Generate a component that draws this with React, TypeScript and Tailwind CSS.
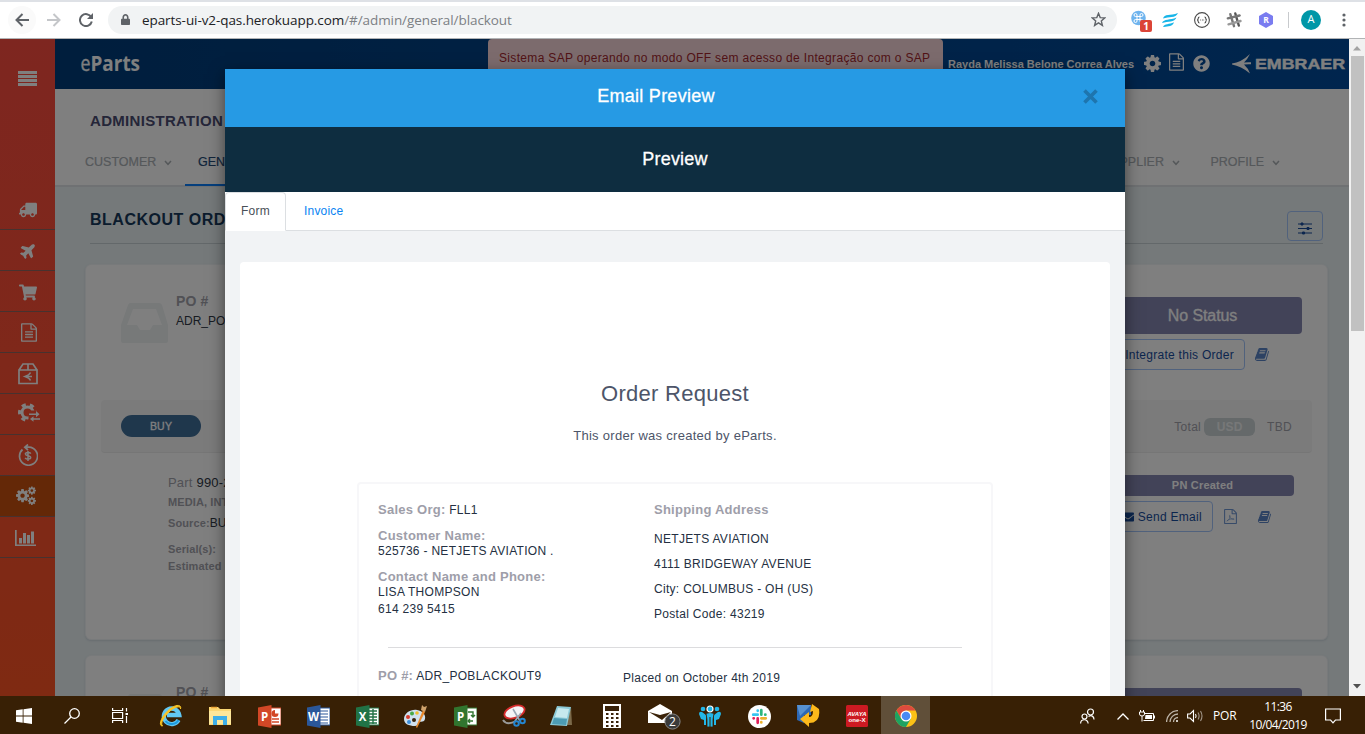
import React from "react";
import { FaTruck, FaPlane, FaShoppingCart, FaQuestionCircle, FaEnvelope, FaLock } from "react-icons/fa";

const COG =
  "M1024 896q0-106-75-181t-181-75-181 75-75 181 75 181 181 75 181-75 75-181zm512-109v222q0 12-8 23t-20 13l-185 28q-19 54-39 91 35 50 107 138 10 12 10 25t-9 23q-27 37-99 108t-94 71q-12 0-26-9l-138-108q-44 23-91 38-16 136-29 186-7 28-36 28h-222q-14 0-24.500-8.500t-11.500-21.500l-28-184q-49-16-90-37l-141 107q-10 9-25 9-14 0-25-11-126-114-165-168-7-10-7-23 0-12 8-23 15-21 51-66.500t54-70.500q-27-50-41-99l-183-27q-13-2-21-12.500t-8-23.500v-222q0-12 8-23t19-13l186-28q14-46 39-92-40-57-107-138-10-12-10-24 0-10 9-23 26-36 98.500-107.500t94.500-71.500q13 0 26 10l138 107q44-23 91-38 16-136 29-186 7-28 36-28h222q14 0 24.500 8.500t11.500 21.500l28 184q49 16 90 37l142-107q9-9 24-9 13 0 25 10 129 119 165 170 7 8 7 22 0 12-8 23-15 21-51 66.500t-54 70.500q26 50 41 98l183 28q13 2 21 12.500t8 23.500z";
const FILE_FRAME =
  "M1596 380q28 28 48 76t20 88v1152q0 40-28 68t-68 28h-1344q-40 0-68-28t-28-68v-1600q0-40 28-68t68-28h896q40 0 88 20t76 48zm-444-244v376h376q-10-29-22-41l-313-313q-12-12-41-22zm384 1528v-1024h-416q-40 0-68-28t-28-68v-416h-768v1536h1280z";
const FILE_LINES =
  "M512 800q0-14 9-23t23-9h704q14 0 23 9t9 23v64q0 14-9 23t-23 9h-704q-14 0-23-9t-9-23v-64zm736 224q14 0 23 9t9 23v64q0 14-9 23t-23 9h-704q-14 0-23-9t-9-23v-64q0-14 9-23t23-9h704zm0 256q14 0 23 9t9 23v64q0 14-9 23t-23 9h-704q-14 0-23-9t-9-23v-64q0-14 9-23t23-9h704z";
const BOOK =
  "M1639 478q40 57 18 129l-275 906q-19 64-76.500 107.500t-122.500 43.500h-923q-77 0-148.500-53.500t-99.500-131.500q-24-67-2-127 0-4 3-27t4-37q1-8-3-21.500t-3-19.500q2-11 8-21t16.500-23.500 16.500-23.500q23-38 45-91.500t30-91.500q3-10 .5-30t-.5-28q3-11 17-28t17-23q21-36 42-92t25-90q1-9-2.500-32t.5-28q4-13 22-30.500t22-22.500q19-26 42.500-84.500t27.500-96.500q1-8-3-25.500t-2-26.500q2-8 9-18t18-23 17-21q8-12 16.500-30.500t15-35 16-36 19.500-32 26.500-23.500 36-11.500 47.500 5.500l-1 3q38-9 51-9h761q74 0 114 56t18 130l-274 906q-36 119-71.500 153.500t-128.500 34.500h-869q-27 0-38 15-11 16-1 43 24 70 144 70h923q29 0 56-15.500t35-41.500l300-987q7-22 5-57 38 15 59 43zm-1064 2q-4 13 2 22.500t20 9.500h608q13 0 25.500-9.500t16.500-22.500l21-64q4-13-2-22.500t-20-9.500h-608q-13 0-25.500 9.500t-16.500 22.500zm-83 256q-4 13 2 22.500t20 9.500h608q13 0 25.500-9.500t16.500-22.500l21-64q4-13-2-22.500t-20-9.500h-608q-13 0-25.500 9.500t-16.500 22.500z";

type IconProps = { className?: string };

const Cog = ({ className = "" }: IconProps) => (
  <svg viewBox="0 128 1536 1536" fill="currentColor" className={className}><path d={COG} /></svg>
);
const FileText = ({ className = "" }: IconProps) => (
  <svg viewBox="128 0 1536 1792" fill="currentColor" className={className}><path d={FILE_FRAME} /><path d={FILE_LINES} /></svg>
);
const Book = ({ className = "" }: IconProps) => (
  <svg viewBox="0 0 1792 1792" fill="currentColor" className={className}><path d={BOOK} /></svg>
);
const FilePdf = ({ className = "" }: IconProps) => (
  <svg viewBox="128 0 1536 1792" fill="currentColor" className={className}>
    <path d={FILE_FRAME} />
    <path d="M460 1440C700 1320 860 1050 850 820c-5-90-80-90-80 0 10 240 240 440 500 430 90-5 90-80 0-90C1000 1130 640 1260 460 1440z" fill="none" stroke="currentColor" strokeWidth="75" />
  </svg>
);

function Hamburger() {
  return <svg className="h-[15px] w-[19px]" viewBox="0 0 19 15" fill="currentColor"><rect width="19" height="3" /><rect y="4" width="19" height="3" /><rect y="8" width="19" height="3" /><rect y="12" width="19" height="3" /></svg>;
}
function BoxIcon() {
  return (
    <svg className="h-[22px] w-5" viewBox="0 0 20 22" fill="none" stroke="currentColor" strokeWidth="1.700">
      <path d="M1 7v13.500h18V7zM1 7l4-6h10l4 6M10 1v6" />
      <path d="M12.500 9.500Q11.500 12 7 13.500q4.500 1.500 5.500 4M7 13.500h7" strokeWidth="1.500" />
    </svg>
  );
}
function CogSwap() {
  return (
    <svg className="h-[19px] w-[22px]" viewBox="0 0 22 19">
      <defs><mask id="swapMask"><rect width="22" height="19" fill="#fff" /><rect x="10.500" y="7.500" width="12" height="12" fill="#000" /></mask></defs>
      <g mask="url(#swapMask)"><circle cx="9.500" cy="9.500" r="5.500" fill="none" stroke="currentColor" strokeWidth="3" /><circle cx="9.500" cy="9.500" r="8" fill="none" stroke="currentColor" strokeWidth="3" strokeDasharray="4.200 4.180" strokeDashoffset="2" /></g>
      <path d="M11 10.500h7v-2.500l3.500 3.300-3.500 3v-2.300h-7zM22 15.200h-6.500v-2l-3.500 2.800 3.500 2.800v-2H22z" fill="currentColor" />
    </svg>
  );
}
function MoneyBack() {
  return (
    <svg className="h-[22px] w-5" viewBox="0 0 20 22" fill="none" stroke="currentColor" strokeWidth="1.700">
      <path d="M4.500 5.500A9 9 0 1 0 11 3.200H7M10 .5L6.800 3.200 10 6" />
      <path d="M12.800 9.600c-1-1.500-5.400-1.500-5.400.5 0 2.300 5.300 1 5.300 3.500 0 2-4.600 2-5.500.2M10 7v10" strokeWidth="1.500" />
    </svg>
  );
}
function Cogs() {
  return (
    <svg className="h-5 w-5" viewBox="0 0 20 20" fill="currentColor">
      <g transform="translate(0 3.100) scale(.0085) translate(0 -128)"><path d={COG} /></g>
      <g transform="translate(11.800 .5) scale(.0053) translate(0 -128)"><path d={COG} /></g>
      <g transform="translate(11.800 10.800) scale(.0053) translate(0 -128)"><path d={COG} /></g>
    </svg>
  );
}
function Bars() {
  return <svg className="h-4 w-[21px]" viewBox="0 0 21 16" fill="currentColor"><path d="M0 0h1.700v14.500H21V16H0zM4 8h3v5.500H4zM8 3h3v10.500H8zM12 5h3v8.500h-3zM16 1.500h3v12h-3z" /></svg>;
}
function Inbox() {
  return <svg className="h-10 w-[47px]" viewBox="0 0 47 40"><path fillRule="evenodd" d="M9 0h29q2 0 3 2l6 20v16q0 2-2 2H2q-2 0-2-2V22L7 2q1-2 2-2zM12 6L6 22h10l3 5h10l3-5h9L35 6z" fill="#eef2f3" /></svg>;
}
function Chevron() {
  return <svg className="ml-[8px] h-[6px] w-2" viewBox="0 0 8 6" fill="none" stroke="currentColor" strokeWidth="1.500"><path d="M1 1l3 3.300L7 1" /></svg>;
}

const menu: { icon: React.ReactNode; cls: string; active?: boolean }[] = [
  { icon: <FaTruck className="size-[18px] -scale-x-100" />, cls: "pt-0.5" },
  { icon: <FaPlane className="size-[17px] -rotate-45" />, cls: "pl-0.5" },
  { icon: <FaShoppingCart className="size-[18px] pt-px" />, cls: "pt-0.5" },
  { icon: <FileText className="h-[19px] w-4" />, cls: "pl-0.5" },
  { icon: <BoxIcon />, cls: "pt-0.5" },
  { icon: <CogSwap />, cls: "pl-[3px] pb-1" },
  { icon: <MoneyBack />, cls: "" },
  { icon: <Cogs />, cls: "pr-1", active: true },
  { icon: <Bars />, cls: "pr-[5px] pt-px" },
];

function BrowserBar() {
  return (
    <div className="flex h-[39px] items-center border-b border-[#b1b3b5] bg-white pt-px shadow-[inset_0_2px_0_#dee1e6]">
      <div className="ml-2 flex size-7 items-center justify-center rounded-full bg-[#fafafa]">
        <svg className="size-[14px]" viewBox="0 0 14 14" fill="none" stroke="#5f6368" strokeWidth="2"><path d="M14 7H1.500M7.500 1L1.500 7l6 6" /></svg>
      </div>
      <svg className="ml-[11px] size-[14px]" viewBox="0 0 14 14" fill="none" stroke="#c4c6c9" strokeWidth="2"><path d="M0 7h12.500M6.500 1l6 6-6 6" /></svg>
      <svg className="ml-[18px] size-[14px]" viewBox="0 0 14 14" fill="none" stroke="#5f6368" strokeWidth="2"><path d="M12.300 4.300A6 6 0 1 0 12.800 8.500" /><path d="M14 0v6H8z" fill="#5f6368" stroke="none" /></svg>
      <div className="ml-[15px] flex h-7 w-[1009px] items-center rounded-full bg-[#f1f3f4] pl-[13px]">
        <FaLock className="h-[11px] w-[9px] text-[#5f6368]" preserveAspectRatio="none" />
        <span className="ml-3 font-['Open_Sans',sans-serif] text-[13.500px] leading-7 tracking-[-0.080px] text-[#202124]">eparts-ui-v2-qas.herokuapp.com<span className="text-[#7c8084]">/#/admin/general/blackout</span></span>
        <svg className="mr-[11px] ml-auto size-[15px]" viewBox="0 0 15 15" fill="none" stroke="#5f6368" strokeWidth="1.400"><path d="M7.500 1.300l1.700 4.300 4.600.3-3.500 3 1.100 4.500-3.900-2.500-3.900 2.500 1.100-4.500-3.500-3 4.600-.3z" /></svg>
      </div>
      <svg className="mt-[3px] ml-[14px] h-[22px] w-[21px]" viewBox="0 0 21 22">
        <circle cx="7.500" cy="8" r="7.300" fill="#6fb4ee" />
        <path d="M6 6.500H9V9.500H6zM6 6.500H4.500A1.500 1.500 0 1 1 6 5zM9 6.500V5a1.500 1.500 0 1 1 1.500 1.500zM9 9.500h1.500A1.500 1.500 0 1 1 9 11zM6 9.500V11a1.500 1.500 0 1 1-1.500-1.500z" fill="none" stroke="#fff" />
        <rect x="9" y="10" width="12" height="12" rx="2" fill="#db4437" />
        <text x="15" y="20" textAnchor="middle" fill="#fff" fontSize="10" fontWeight="700" fontFamily="Open Sans">1</text>
      </svg>
      <svg className="ml-[10px] h-[14px] w-4" viewBox="0 0 16 14" fill="#18b5e8"><path d="M1 5.500C2.500 .5 8 3 16 0c-2.500 5.500-9 3.500-15 5.500zM0 10C2 5.500 8 7.500 14.500 4.500 12.500 9.500 6 8 0 10zM1 14.200c1.500-4 6-2.500 11-5-1.500 4.800-6 3.500-11 5z" /></svg>
      <svg className="ml-4 size-4" viewBox="0 0 16 16" fill="none" stroke="#4a4a4a" strokeWidth="1.100"><circle cx="8" cy="8" r="7.400" /><path d="M5.500 5q-1.300 0-1.300 1.500T3 8q1.200 0 1.200 1.500T5.500 11M10.500 5q1.300 0 1.300 1.500T13 8q-1.200 0-1.200 1.500T10.500 11M6.300 8h.8M8 8h.8M9.500 8h.6" /></svg>
      <svg className="ml-4 size-4" viewBox="0 0 16 16" fill="none" stroke="#777" strokeWidth="2.400" strokeLinecap="round"><path d="M4.300 2.200l3.700 12" /><path d="M9.300 1.500l3.500 12" stroke="#555" /><path d="M1.800 6.300L13.500 3.500" /><path d="M2.500 12.300L14.500 9" stroke="#999" /></svg>
      <svg className="ml-4 size-4" viewBox="0 0 16 16"><path d="M8 0l7 4v8l-7 4-7-4V4z" fill="#7a7cf0" /><text x="8" y="11" textAnchor="middle" fontSize="8.500" fontWeight="700" fill="#fff" fontFamily="Open Sans">R</text></svg>
      <div className="ml-[14px] h-4 w-px bg-[#c8cacd]" />
      <div className="ml-3 flex size-5 items-center justify-center rounded-full bg-[#0097a7] font-['Open_Sans',sans-serif] text-[11px] text-white">A</div>
      <svg className="ml-[21px] h-[14px] w-1" viewBox="0 0 4 14" fill="#5f6368"><circle cx="2" cy="2" r="1.600" /><circle cx="2" cy="7" r="1.600" /><circle cx="2" cy="12" r="1.600" /></svg>
    </div>
  );
}

function Sidebar() {
  return (
    <aside className="flex w-[55px] flex-col bg-linear-to-b from-[#fd4c40] to-[#ff5424] text-white">
      <div className="flex h-[150px] justify-center pt-8"><Hamburger /></div>
      {menu.map((m, i) => (
        <div key={i} className={`flex h-[41px] items-center justify-center border-b border-[#8f655f] ${m.active ? "bg-[#c8500f]" : ""} ${m.cls}`}>{m.icon}</div>
      ))}
    </aside>
  );
}

function Header() {
  return (
    <header className="flex h-[50px] bg-linear-to-r from-[#003c7a] to-[#004b9c] text-white">
      <svg className="mt-[14px] ml-[25px] h-6 w-[61px] flex-none" viewBox="0 0 61 24" fill="#fff" fontFamily="Open Sans" fontSize="21">
        <text x=".5" y="18" textLength="10" lengthAdjust="spacingAndGlyphs" stroke="#fff" strokeWidth=".3">e</text>
        <text x="10.500" y="18" fontWeight="700" textLength="49.500" lengthAdjust="spacingAndGlyphs">Parts</text>
      </svg>
      <div className="ml-[347px] h-[50px] w-[455px] flex-none rounded-t bg-[#f8d7da] pl-[11px] text-[12px] leading-[38px] tracking-[0.330px] whitespace-nowrap text-[#a5282f]">Sistema SAP operando no modo OFF sem acesso de Integração com o SAP</div>
      <div className="ml-[5px] w-[186px] flex-none pt-[17px] text-[11px] leading-4 font-bold whitespace-nowrap">Rayda Melissa Belone Correa Alves</div>
      <Cog className="mt-4 ml-[10px] size-[17px] flex-none" />
      <FileText className="mt-[14px] ml-[8px] h-[18px] w-[15px] flex-none" />
      <FaQuestionCircle className="mt-4 ml-[9px] size-[17px] flex-none" />
      <svg className="mt-[14px] ml-[22px] h-[22px] w-[115px] flex-none" viewBox="0 0 115 22" fill="#fff">
        <path d="M0 10.500Q9 9.500 18 1q-3 6-6 8.500 3-.5 7-.3v2q-4-.2-7 .3 4 3.500 6 9Q9 13 0 11.500z" />
        <text x="23" y="16" fontFamily="Liberation Sans" fontWeight="700" fontSize="14" stroke="#fff" strokeWidth=".4" textLength="90" lengthAdjust="spacingAndGlyphs">EMBRAER</text>
      </svg>
    </header>
  );
}

function Nav() {
  return (
    <nav className="h-[98px] border-b-2 border-[#dfe3e6] bg-white">
      <h1 className="pt-[22px] pl-[35px] text-[15px] leading-5 font-bold tracking-[0.300px] text-[#4a4d72]">ADMINISTRATION</h1>
      <div className="mt-[12px] flex h-[43px] pl-[30px] text-[12.500px] text-[#aab0b5] [-webkit-text-stroke:0.2px]">
        <div className="flex w-[100px] items-center pb-1">CUSTOMER<Chevron /></div>
        <div className="flex w-[110px] items-center border-b-2 border-[#0a7ffb] pb-0.5 pl-[13px] text-[#234a77]">GENERAL<Chevron /></div>
        <div className="ml-auto flex w-[121px] items-center justify-end pr-[6px] pb-1">SUPPLIER<Chevron /></div>
        <div className="mr-[69px] flex w-[94px] items-center justify-end pb-1">PROFILE<Chevron /></div>
      </div>
    </nav>
  );
}

function OrderCard() {
  return (
    <section className="mx-[30px] mr-[21px] h-[376px] rounded-md border border-[#f0f4f6] bg-white shadow-[0_1px_2px_#ced9e0] text-[#a2a2ab]">
      <div className="flex h-[135px] justify-between">
        <div className="flex pl-[35px]">
          <div className="pt-[38px]"><Inbox /></div>
          <div className="pt-[27px] pl-2">
            <div className="text-[14px] leading-[18px] font-bold tracking-[0.100px]">PO #</div>
            <div className="mt-[2px] text-[12px] leading-[18px] text-[#303846]">ADR_POBLACKOUT9</div>
          </div>
        </div>
        <div className="mr-[25px] w-[199px] pt-8">
          <div className="h-[37px] rounded bg-[#8586b1] text-center text-[16px] leading-[38px] tracking-[-0.100px] text-white [-webkit-text-stroke:0.3px]">No Status</div>
          <div className="mt-[5px] flex items-center">
            <div className="h-[31px] w-[142px] rounded border border-[#a3c5fa] pr-[10px] text-right text-[12px] leading-[30px] tracking-[0.270px] whitespace-nowrap text-[#184d9d]">Integrate this Order</div>
            <Book className="ml-[10px] size-[15px] text-[#5b85c6]" />
          </div>
        </div>
      </div>
      <div className="mx-[15px] flex h-[53px] items-center justify-between rounded border-b border-[#ececec] bg-[#f7f7f7]">
        <div className="ml-5 h-[22px] w-20 rounded-full bg-[#3f6e98] text-center text-[10.500px] leading-[22px] tracking-[0.200px] text-white [-webkit-text-stroke:0.3px]">BUY</div>
        <div className="flex items-center pt-0.5 pr-5 text-[12px] tracking-[0.300px]">Total<span className="mr-[12px] ml-[3px] h-[18px] w-[51px] rounded-md bg-[#cbd3d5] text-center text-[12px] leading-[18px] font-bold tracking-[0.200px] text-white/70">USD</span>TBD</div>
      </div>
      <div className="flex justify-between">
        <div className="pt-[21px] pl-[82px] text-[11px] leading-[17px] font-bold tracking-[0.100px]">
          <div className="text-[13px] leading-[18px] font-normal tracking-[0.200px]">Part <span className="text-[#303846]">990-2455-001</span></div>
          <div className="mt-[2px]">MEDIA, INTEGRATED</div>
          <div className="mt-[4px]">Source:<span className="text-[12px] font-normal text-[#303846]">BUY</span></div>
          <div className="mt-[9px]">Serial(s):</div>
          <div>Estimated Date:</div>
        </div>
        <div className="mr-[33px] w-[183px] pt-[22px]">
          <div className="h-[21px] rounded bg-[#8586b1] text-center text-[11px] leading-[21px] font-bold tracking-[0.200px] text-white">PN Created</div>
          <div className="mt-[5px] flex items-center">
            <div className="flex h-[31px] w-[102px] items-center justify-end rounded border border-[#a3c5fa] pr-[10px] text-[12px] tracking-[0.300px] text-[#184d9d]"><FaEnvelope className="mr-[4px] size-[12px]" />Send Email</div>
            <FilePdf className="ml-[11px] h-[15px] w-[13px] text-[#6f96d2]" />
            <Book className="ml-[21px] size-[14px] text-[#5b85c6]" />
          </div>
        </div>
      </div>
    </section>
  );
}

function EmailModal() {
  return (
    <div className="absolute top-[30px] left-[225px] h-[640px] w-[900px] bg-[#f1f3f5] shadow-[0_5px_15px_rgba(0,0,0,.5)]">
      <div className="flex h-[58px] bg-[#269ae4] text-white">
        <div className="flex-1 pl-[16px] text-center text-[18px] leading-[54px] tracking-[0.250px] [-webkit-text-stroke:0.3px]">Email Preview</div>
        <svg className="mt-[20px] mr-[27px] ml-[12px] size-[15px]" viewBox="0 0 15 15" fill="none" stroke="#1e75ae" strokeWidth="3.600"><path d="M1.500 1.500l12 12M13.500 1.500l-12 12" /></svg>
      </div>
      <div className="h-[65px] bg-[#0e2d40] text-center text-[18px] leading-[64px] tracking-[0.200px] text-white [-webkit-text-stroke:0.3px]">Preview</div>
      <div className="flex h-[39px] border-b border-[#dcdfe2] bg-white text-[12px] leading-[37px]">
        <div className="h-[39px] w-[61px] rounded-t border border-[#dcdfe2] border-b-white bg-white text-center tracking-[0.300px] text-[#495057]">Form</div>
        <div className="pl-[18px] leading-[38px] tracking-[0.200px] text-[#0a84f2]">Invoice</div>
      </div>
      <div className="mx-[15px] mt-[31px] h-[450px] rounded bg-white pt-[118px] text-[#243042]">
        <h2 className="text-center text-[22px] leading-[27px] tracking-[0.280px] text-[#4d5569]">Order Request</h2>
        <p className="mt-[20px] text-center text-[13px] leading-[18px] tracking-[0.280px] text-[#4d5569]">This order was created by eParts.</p>
        <div className="mx-[117px] mt-[37px] h-[300px] rounded border-2 border-[#f7f7f9] pt-[17px] pr-[17px] pl-[19px] text-[12px] tracking-[0.300px]">
          <div className="flex h-[146px]">
            <div className="w-[276px]">
              <div className="leading-[18px]"><Label>Sales Org:</Label> FLL1</div>
              <div className="mt-[9px] leading-4"><Label>Customer Name:</Label></div>
              <div className="leading-[15px]">525736 - NETJETS AVIATION .</div>
              <div className="mt-[10px] leading-4"><Label>Contact Name and Phone:</Label></div>
              <div className="leading-[15px]">LISA THOMPSON</div>
              <div className="leading-[18px]">614 239 5415</div>
            </div>
            <div className="leading-[25px]">
              <div className="mb-[8px] leading-[18px]"><Label>Shipping Address</Label></div>
              <div>NETJETS AVIATION</div>
              <div>4111 BRIDGEWAY AVENUE</div>
              <div>City: COLUMBUS - OH (US)</div>
              <div>Postal Code: 43219</div>
            </div>
          </div>
          <hr className="mr-[12px] ml-[10px] border-[#dcdcde]" />
          <div className="flex pt-[19px] leading-[18px]">
            <div className="w-[245px]"><Label>PO #:</Label> ADR_POBLACKOUT9</div>
            <div className="pt-[2px]">Placed on October 4th 2019</div>
          </div>
        </div>
      </div>
    </div>
  );
}

const Label = ({ children }: { children: React.ReactNode }) => (
  <span className="text-[13px] font-bold tracking-[0.250px] text-[#9e9ea9]">{children}</span>
);

function Office({ letter, color, kind }: { letter: string; color: string; kind: string }) {
  return (
    <svg className="size-[23px]" viewBox="0 0 23 23">
      <rect x="11" y="3" width="12" height="17" fill="#fff" stroke={color} />
      {kind === "pie" && <><circle cx="17" cy="8.500" r="3.500" fill={color} /><path d="M17 8.500V4.500h4v4z" fill="#fff" /><path d="M14 14h7M14 17h7" stroke={color} strokeWidth="1.300" /></>}
      {kind === "lines" && <path d="M13 6h8M13 9h8M13 12h8M13 15h8M13 18h8" stroke={color} strokeWidth="1.200" />}
      {kind === "grid" && <path d="M13 6h8M13 9h8M13 12h8M13 15h8M13 18h8M17 4v15" stroke={color} strokeWidth="1.400" />}
      {kind === "flow" && <path d="M14 7h5v5M17 10l2 2 2-2M19 16h-5M16 14l-2 2 2 2" fill="none" stroke={color} strokeWidth="1.400" />}
      <path d="M0 2.500L13.500 0v23L0 20.500z" fill={color} />
      <text x="6.500" y="15.500" fontSize="11.500" fontWeight="700" fontFamily="Open Sans" fill="#fff" textAnchor="middle">{letter}</text>
    </svg>
  );
}

const petals = [0, 90, 180, 270];
const slack = ["#36c5f0", "#2eb67d", "#ecb22e", "#e01e5a"];

const apps: React.ReactNode[] = [
  <svg className="mr-0.5 size-6" viewBox="0 0 24 24"><path d="M19.500 16a7.800 7.800 0 1 1 .8-5H8" fill="none" stroke="#62c8f4" strokeWidth="4.300" /><path d="M19.500 16a7.800 7.800 0 0 1-13 1" fill="none" stroke="#1c9be0" strokeWidth="2" /><path d="M3.500 22C-1 22 2 13 9 6.500S23 0 21.500 5C22 1 15 3 10 8S1 19 3.500 22z" fill="#f9c425" stroke="#f9c425" /></svg>,
  <svg className="mr-0.5 size-[22px]" viewBox="0 0 22 22"><path d="M0 2h9l2 2h11v16H0z" fill="#fbd775" /><path d="M0 6h22v13H0z" fill="#fde69a" /><path d="M2 2.500h6" stroke="#f0a93a" strokeWidth="1.500" /><path d="M4 20v-9h14v9h-4v-5H8v5z" fill="#3daee9" /></svg>,
  <Office letter="P" color="#d24726" kind="pie" />,
  <Office letter="W" color="#2b579a" kind="lines" />,
  <Office letter="X" color="#217346" kind="grid" />,
  <svg className="mr-1 size-6" viewBox="0 0 24 24"><path d="M1 15C1 9 8 5 14 6s9 5 8 9-4 2-6 3 0 4-4 4C6 22 1 20 1 15z" fill="#cfe0ee" /><circle cx="5" cy="13" r="2" fill="#d93a2b" /><circle cx="9" cy="9.500" r="2" fill="#47a847" /><circle cx="14" cy="9" r="1.800" fill="#f2bd2c" /><circle cx="6" cy="18" r="2" fill="#3b8edb" /><circle cx="11" cy="16" r="2" fill="#38220a" /><path d="M20 6l-7 17 1 1 8-16z" fill="#e9892d" /><path d="M18 6l1-5 2 2 3-1-2 6z" fill="#cfa26c" /></svg>,
  <Office letter="P" color="#31752f" kind="flow" />,
  <svg className="size-6" viewBox="0 0 24 24" fill="none"><path d="M1 16q4 6 13 1" stroke="#999" strokeWidth="2" /><ellipse cx="12.500" cy="8" rx="10.500" ry="5.800" transform="rotate(-20 12.500 8)" fill="#f4f4f6" stroke="#d52b2b" strokeWidth="1.800" /><path d="M11 5l7 12M19 9l-6 8" stroke="#9aa8b5" strokeWidth="1.600" /><circle cx="14.500" cy="19.500" r="2.300" stroke="#2486d1" strokeWidth="2" /><circle cx="20.500" cy="17" r="2.300" stroke="#2486d1" strokeWidth="2" /></svg>,
  <svg className="mr-1 size-6" viewBox="0 0 24 24"><path d="M22 3l1 18H17z" fill="#7c6a4a" /><path d="M8 2l14 1-4 19-17-1z" fill="#8bc9d6" /><path d="M9 4l11 1-2 9-12-1z" fill="#c6e9ee" /><path d="M5 14l13 1-1 6-14-1z" fill="#4d9cb4" /></svg>,
  <svg className="h-6 w-[18px]" viewBox="0 0 18 24"><path d="M0 0h18v24H0z" fill="#fff" /><path d="M2 2h14v5H2z" fill="#3a2209" /><path d="M3 10h3M8 10h3M13 10h3M3 14h3M8 14h3M13 14h3M3 18h3M8 18h3M13 18h3M3 22h3M8 22h3M13 22h3" stroke="#3a2209" strokeWidth="2" strokeDasharray="2.500 2.500" /></svg>,
  <svg className="ml-1.5 h-[26px] w-8 overflow-visible" viewBox="0 0 32 26"><path d="M0 8L12 1l12 7v12H0z" fill="#fff" /><path d="M1 9l13 8 9-8-11 3z" fill="#3a2209" /><circle cx="24.500" cy="18.500" r="7.600" fill="#3b3b3b" stroke="#888" /><text x="24.500" y="22.800" fontSize="12" fill="#fff" fontFamily="Open Sans" textAnchor="middle">2</text></svg>,
  <svg className="size-[22px]" viewBox="0 0 22 22" fill="#23b7e8"><circle cx="4" cy="4" r="2.300" /><circle cx="18" cy="4" r="2.300" /><path d="M0 9q0-3 3-2l4 3v10H5v-5l-3-1zM22 9q0-3-3-2l-4 3v10h2v-5l3-1z" /><path d="M7 8.500q4-2 8 0l-1 6v7.500H8v-7.500z" stroke="#382005" strokeWidth=".8" /><circle cx="11" cy="4" r="3" stroke="#fff" strokeWidth="1.200" /><path d="M11 12v10" stroke="#382005" /></svg>,
  <svg className="size-[23px]" viewBox="0 0 23 23"><circle cx="11.500" cy="11.500" r="11.500" fill="#fff" />{petals.map((a, i) => <path key={a} transform={`rotate(${a} 11.500 11.500)`} d="M5.200 9.700h4.500M9.700 5.600v.2" fill="none" stroke={slack[i]} strokeWidth="2.700" strokeLinecap="round" />)}</svg>,
  <svg className="size-6" viewBox="0 0 24 24"><path d="M1 1h14v10H8v8L1 16z" fill="#2d68b5" /><path d="M1 1h14L4 12z" fill="#6aa3dc" opacity=".7" /><path d="M16 0l7 5q2 14-10 14v4l-9-8 9-7v5q4 0 4-6l-3 1z" fill="#fdb91b" /></svg>,
  <svg className="size-[22px]" viewBox="0 0 22 22"><rect width="22" height="22" rx="1.500" fill="#cc1a22" /><text x="1.500" y="10.500" fontSize="6" fontWeight="700" fontStyle="italic" fontFamily="Liberation Sans" fill="#fff" textLength="19" lengthAdjust="spacingAndGlyphs">AVAYA</text><text x="2.500" y="16.500" fontSize="5" fontWeight="700" fontFamily="Liberation Sans" fill="#fff" textLength="17" lengthAdjust="spacingAndGlyphs">one-X</text></svg>,
  <svg className="size-[22px]" viewBox="0 0 22 22"><circle cx="11" cy="11" r="11" fill="#fbc116" /><path d="M1.470 5.500A11 11 0 0 1 20.530 5.500H11L6.240 13.750z" fill="#dd4b3e" /><path d="M1.470 5.500A11 11 0 0 0 11 22l4.760-8.250H6.240z" fill="#1da362" /><circle cx="11" cy="11" r="5.500" fill="#fff" /><circle cx="11" cy="11" r="4.300" fill="#4a8af4" /></svg>,
];

function Taskbar() {
  return (
    <footer className="flex h-[38px] items-stretch bg-[#382005] font-['Open_Sans',sans-serif] text-white">
      <div className="flex w-12 items-center justify-center pt-0.5"><svg className="size-4" viewBox="0 0 16 16" fill="#fff"><path d="M0 2.300L6.700 1.300V7.600H0zM7.500 1.200L16 0v7.600H7.500zM0 8.400h6.700v6.300L0 13.700zM7.500 8.400H16V16l-8.500-1.200z" /></svg></div>
      <div className="flex w-12 items-center justify-center pt-0.5"><svg className="size-4" viewBox="0 0 16 16" fill="none" stroke="#fff" strokeWidth="1.300"><circle cx="10.500" cy="5.500" r="4.800" /><path d="M7 9L.5 15.500" /></svg></div>
      <div className="flex w-[51.500px] items-center pl-4"><svg className="h-[15px] w-4" viewBox="0 0 16 15" fill="none" stroke="#fff" strokeWidth="1.200"><path d="M.6 0v2.500h10V0M.6 15v-2.500h10V15M.6 4.500h10v6H.6zM14.500 0v3.500M14.500 8v7" /><path d="M13.500 5h2.500v2h-2.500z" fill="#fff" stroke="none" /></svg></div>
      {apps.map((a, i) => (
        <div key={i} className={`flex w-[48.930px] items-center justify-center pt-0.5 ${i === 15 ? "bg-[#604f39]" : ""}`}>{a}</div>
      ))}
      <div className="ml-auto flex items-center pt-0.5 pr-6">
        <svg className="h-4 w-[15px]" viewBox="0 0 15 16" fill="none" stroke="#fff" strokeWidth="1.200"><circle cx="10.500" cy="4" r="3" /><circle cx="4.500" cy="8.500" r="2.500" /><path d="M.6 15.500c0-5 7.500-5 7.500 0M8.500 8.500c3-2 5.500 0 5.500 3" /></svg>
        <svg className="ml-[22px] h-[7px] w-3" viewBox="0 0 12 7" fill="none" stroke="#fff" strokeWidth="1.300"><path d="M.5 6.500L6 1l5.500 5.500" /></svg>
        <svg className="ml-[10px] h-3 w-4" viewBox="0 0 16 12" fill="none" stroke="#fff"><path d="M1.500 0v2M4.500 0v2M0.500 2h5v2q0 2-2.500 2t-2.500-2zM3 6v5.500M5 3.500h9.500v7H4.500M15.500 5.500v3" /><path d="M6.500 5h6.500v4H6z" fill="#fff" stroke="none" /></svg>
        <svg className="ml-[11px] size-3" viewBox="0 0 12 12" fill="none" stroke="#bdb4a8" strokeWidth="1.300"><path d="M.6 12A11.400 11.400 0 0 1 12 .6M4 12a8 8 0 0 1 8-8M7.500 12A4.500 4.500 0 0 1 12 7.500" /><circle cx="11" cy="11" r="1" fill="#fff" stroke="none" /></svg>
        <svg className="ml-[9px] h-[14px] w-4" viewBox="0 0 16 14" fill="none" stroke="#fff" strokeWidth="1.100"><path d="M.6 5h2.500L6.500 1.500v11L3 9H.6zM8.500 5q1.200 2 0 4" /><path d="M11 3.500q2.200 3.500 0 7M13.500 2q3 5 0 10" stroke="#a2978a" /></svg>
        <span className="ml-[10px] w-[27px] text-[12px] leading-4 tracking-[-0.200px]">POR</span>
        <div className="ml-[5px] w-[66px] text-center text-[12px] leading-[18px] tracking-[-0.600px]"><div>11:36</div><div>10/04/2019</div></div>
        <svg className="ml-[14px] h-4 w-4" viewBox="0 0 16 16" fill="none" stroke="#fff" strokeWidth="1.200"><path d="M.6 1h14.800v11h-5L8 14.800 5.600 12h-5z" /></svg>
      </div>
    </footer>
  );
}

export default function App() {
  return (
    <div className="h-[734px] w-[1365px] overflow-hidden font-['Liberation_Sans',Arial,sans-serif]">
      <BrowserBar />
      <div className="relative flex h-[657px] overflow-hidden">
        <div className="flex h-[657px] w-[1349px] flex-none overflow-hidden">
          <Sidebar />
          <main className="w-[1294px] bg-[#eaf2f4]">
            <Header />
            <Nav />
            <div className="mx-[35px] mr-[26px] flex h-[57px] justify-between border-b border-[#c7d0d4]">
              <h2 className="pt-[23px] text-[16px] leading-5 font-bold tracking-[0.500px] text-[#16385a]">BLACKOUT ORDERS</h2>
              <div className="mt-[24px] flex h-[30px] w-9 items-center justify-center rounded border border-[#a3c5fa] pt-1">
                <svg className="h-[13px] w-[14px]" viewBox="0 0 14 13" stroke="#184d9d" strokeWidth="1" fill="#184d9d"><path d="M0 2h14M0 6.500h14M0 11h14" /><path d="M3 1h2v2H3zM9 5.500h2v2H9zM4.500 10h2v2h-2z" /></svg>
              </div>
            </div>
            <div className="flex flex-col gap-[15px] pt-5"><OrderCard /><OrderCard /></div>
          </main>
        </div>
        <div className="flex w-4 flex-none flex-col items-center bg-[#f1f1f1]">
          <svg className="mt-[7px] h-[5px] w-2" viewBox="0 0 8 5" fill="#a3a3a3"><path d="M4 0l4 4.500H0z" /></svg>
          <div className="mt-[5px] h-[275px] w-[13px] bg-[#c1c1c1]" />
          <svg className="mt-auto mb-[7px] h-[5px] w-2" viewBox="0 0 8 5" fill="#505050"><path d="M0 0h8L4 4.500z" /></svg>
        </div>
        <div className="absolute inset-y-0 left-0 w-[1349px] bg-black/50" />
        <EmailModal />
      </div>
      <Taskbar />
    </div>
  );
}
